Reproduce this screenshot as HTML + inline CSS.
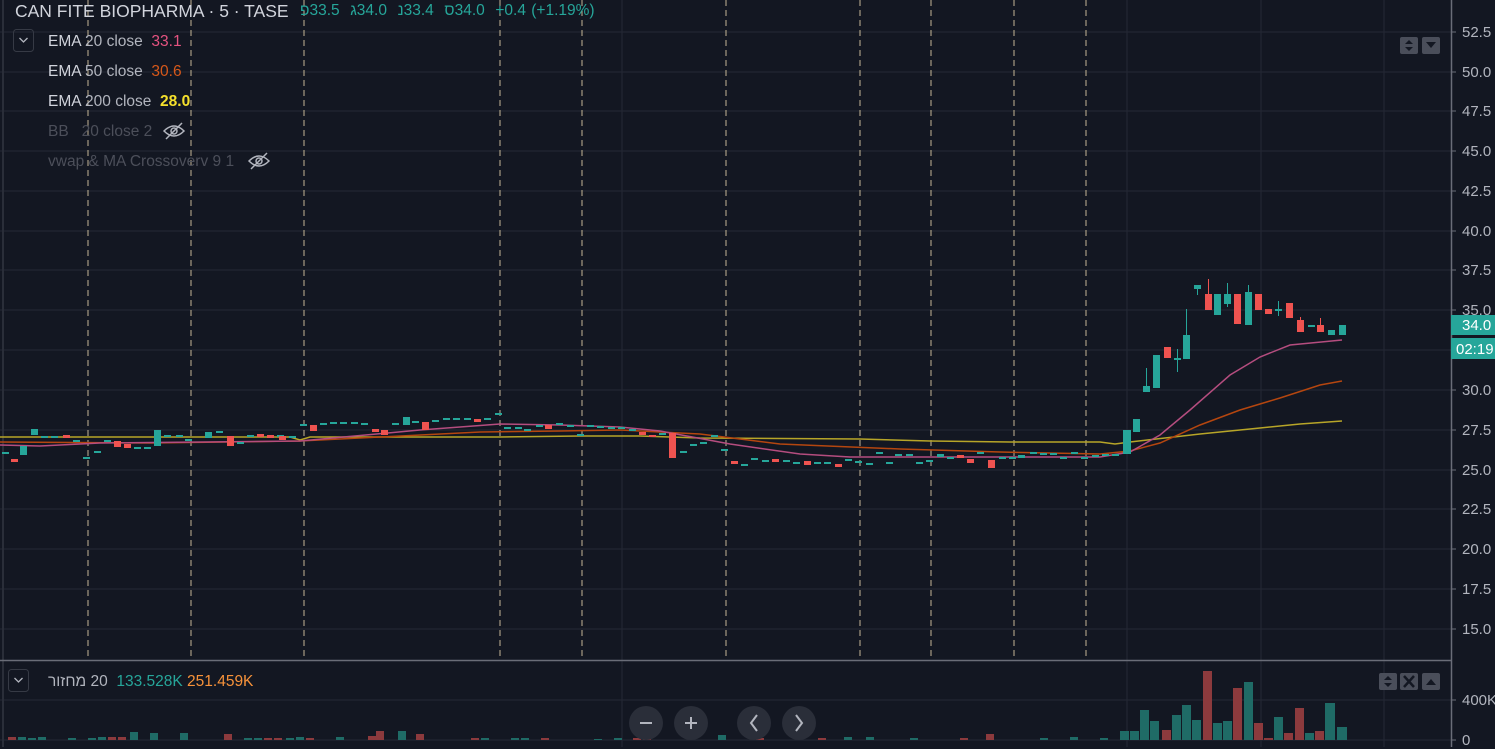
<!DOCTYPE html>
<html><head><meta charset="utf-8"><style>
html,body{margin:0;padding:0;background:#131722;width:1495px;height:747px;overflow:hidden;font-family:"Liberation Sans","Noto Sans CJK JP",sans-serif;}
svg{position:absolute;left:0;top:0}
.t{position:absolute;white-space:nowrap;font-size:15.5px;color:#d1d4dc;direction:ltr;unicode-bidi:isolate}
.t span,.t bdi{unicode-bidi:isolate}
.ax{position:absolute;left:1462px;font-size:15px;color:#b2b5be}
</style></head><body>
<svg width="1495" height="747">
<g stroke="#252935" stroke-width="1">
<line x1="0" y1="32" x2="1451" y2="32"/><line x1="0" y1="72" x2="1451" y2="72"/><line x1="0" y1="111" x2="1451" y2="111"/><line x1="0" y1="151" x2="1451" y2="151"/><line x1="0" y1="191" x2="1451" y2="191"/><line x1="0" y1="231" x2="1451" y2="231"/><line x1="0" y1="270" x2="1451" y2="270"/><line x1="0" y1="310" x2="1451" y2="310"/><line x1="0" y1="350" x2="1451" y2="350"/><line x1="0" y1="390" x2="1451" y2="390"/><line x1="0" y1="430" x2="1451" y2="430"/><line x1="0" y1="470" x2="1451" y2="470"/><line x1="0" y1="509" x2="1451" y2="509"/><line x1="0" y1="549" x2="1451" y2="549"/><line x1="0" y1="589" x2="1451" y2="589"/><line x1="0" y1="629" x2="1451" y2="629"/>
<line x1="0" y1="700" x2="1451" y2="700"/><line x1="0" y1="740" x2="1451" y2="740"/>
<line x1="622" y1="0" x2="622" y2="747"/><line x1="1127" y1="0" x2="1127" y2="747"/><line x1="1261" y1="0" x2="1261" y2="747"/><line x1="1384" y1="0" x2="1384" y2="747"/>
<line x1="3" y1="0" x2="3" y2="747" stroke="#2a2e39" stroke-width="2"/>
</g>
<g stroke="#d9c8a2" stroke-width="1" stroke-dasharray="6,4" opacity="0.9">
<line x1="88" y1="0" x2="88" y2="660"/><line x1="191" y1="0" x2="191" y2="660"/><line x1="304" y1="0" x2="304" y2="660"/><line x1="500" y1="0" x2="500" y2="660"/><line x1="582" y1="0" x2="582" y2="660"/><line x1="726" y1="0" x2="726" y2="660"/><line x1="860" y1="0" x2="860" y2="660"/><line x1="931" y1="0" x2="931" y2="660"/><line x1="1014" y1="0" x2="1014" y2="660"/><line x1="1086" y1="0" x2="1086" y2="660"/>
</g>
<line x1="0" y1="660.5" x2="1451" y2="660.5" stroke="#6a6d78" stroke-width="1.5"/>
<line x1="1451.5" y1="0" x2="1451.5" y2="747" stroke="#6a6d78" stroke-width="1.5"/>
<g stroke="#6a6d78"><line x1="1451" y1="32" x2="1456" y2="32"/><line x1="1451" y1="72" x2="1456" y2="72"/><line x1="1451" y1="111" x2="1456" y2="111"/><line x1="1451" y1="151" x2="1456" y2="151"/><line x1="1451" y1="191" x2="1456" y2="191"/><line x1="1451" y1="231" x2="1456" y2="231"/><line x1="1451" y1="270" x2="1456" y2="270"/><line x1="1451" y1="310" x2="1456" y2="310"/><line x1="1451" y1="390" x2="1456" y2="390"/><line x1="1451" y1="430" x2="1456" y2="430"/><line x1="1451" y1="470" x2="1456" y2="470"/><line x1="1451" y1="509" x2="1456" y2="509"/><line x1="1451" y1="549" x2="1456" y2="549"/><line x1="1451" y1="589" x2="1456" y2="589"/><line x1="1451" y1="629" x2="1456" y2="629"/><line x1="1451" y1="700" x2="1456" y2="700"/><line x1="1451" y1="740" x2="1456" y2="740"/></g>
<polyline fill="none" stroke="#b7a528" stroke-width="1.5" points="0,437 290,437 300,440 310,437 500,437 580,436 640,436 700,438 860,439 930,441 1010,442 1100,442 1115,444 1130,442 1200,434 1260,428 1300,424 1342,421"/>
<polyline fill="none" stroke="#b5460f" stroke-width="1.5" points="0,442 150,443 300,441 480,432 560,431 620,430 700,434 780,444 900,449 1000,452 1100,454 1130,451 1160,443 1200,425 1240,410 1280,398 1320,385 1342,381"/>
<polyline fill="none" stroke="#b54d7f" stroke-width="1.5" points="0,445 40,446 100,443 300,441 420,430 500,424 560,425 620,427 660,431 730,444 800,454 850,457 1000,457 1100,457 1130,452 1160,435 1190,410 1230,375 1260,357 1290,345 1342,340"/>
<g fill="#26a69a">
<rect x="2" y="452" width="7" height="2"/><rect x="20" y="446" width="7" height="9"/><rect x="31" y="429" width="7" height="6"/><rect x="41" y="436" width="7" height="2"/><rect x="51" y="436" width="7" height="2"/><rect x="73" y="440" width="7" height="2"/><rect x="83" y="457" width="7" height="2"/><rect x="94" y="451" width="7" height="2"/><rect x="104" y="440" width="7" height="2"/><rect x="134" y="447" width="7" height="2"/><rect x="144" y="447" width="7" height="2"/><rect x="154" y="430" width="7" height="16"/><rect x="164" y="435" width="7" height="2"/><rect x="176" y="435" width="7" height="2"/><rect x="185" y="439" width="7" height="2"/><rect x="205" y="432" width="7" height="6"/><rect x="216" y="431" width="7" height="2"/><rect x="237" y="442" width="7" height="2"/><rect x="247" y="435" width="7" height="2"/><rect x="277" y="435" width="7" height="2"/>
<rect x="289" y="436" width="7" height="2"/><rect x="300" y="424" width="7" height="2"/><rect x="320" y="423" width="7" height="2"/><rect x="330" y="422" width="7" height="2"/><rect x="340" y="422" width="7" height="2"/><rect x="351" y="422" width="7" height="2"/><rect x="361" y="423" width="7" height="2"/><rect x="392" y="423" width="7" height="2"/><rect x="403" y="417" width="7" height="8"/><rect x="412" y="421" width="7" height="2"/><rect x="432" y="420" width="7" height="2"/><rect x="443" y="418" width="7" height="2"/><rect x="453" y="418" width="7" height="2"/><rect x="464" y="418" width="7" height="2"/><rect x="484" y="418" width="7" height="2"/><rect x="495" y="413" width="7" height="2"/><rect x="504" y="427" width="7" height="2"/><rect x="515" y="427" width="7" height="2"/><rect x="524" y="429" width="7" height="2"/><rect x="536" y="425" width="7" height="2"/><rect x="556" y="423" width="7" height="2"/><rect x="567" y="425" width="7" height="2"/><rect x="577" y="434" width="7" height="2"/><rect x="587" y="425" width="7" height="2"/><rect x="597" y="426" width="7" height="2"/>
<rect x="608" y="427" width="7" height="2"/><rect x="618" y="427" width="7" height="2"/><rect x="629" y="429" width="7" height="2"/><rect x="659" y="433" width="7" height="2"/><rect x="680" y="451" width="7" height="2"/><rect x="690" y="444" width="7" height="2"/><rect x="700" y="442" width="7" height="2"/><rect x="711" y="435" width="7" height="2"/><rect x="721" y="449" width="7" height="2"/><rect x="741" y="464" width="7" height="2"/><rect x="751" y="458" width="7" height="2"/><rect x="762" y="460" width="7" height="2"/><rect x="783" y="460" width="7" height="2"/><rect x="793" y="462" width="7" height="2"/><rect x="814" y="462" width="7" height="2"/><rect x="824" y="462" width="7" height="2"/><rect x="845" y="459" width="7" height="2"/><rect x="855" y="461" width="7" height="2"/><rect x="866" y="463" width="7" height="2"/><rect x="876" y="452" width="7" height="2"/><rect x="886" y="462" width="7" height="2"/><rect x="895" y="454" width="7" height="2"/><rect x="906" y="454" width="7" height="2"/><rect x="916" y="462" width="7" height="2"/><rect x="926" y="460" width="7" height="2"/><rect x="937" y="454" width="7" height="3"/><rect x="947" y="457" width="7" height="2"/><rect x="977" y="452" width="7" height="2"/><rect x="999" y="457" width="7" height="2"/><rect x="1009" y="457" width="7" height="2"/><rect x="1018" y="455" width="7" height="3"/><rect x="1030" y="452" width="7" height="2"/><rect x="1040" y="453" width="7" height="2"/><rect x="1050" y="453" width="7" height="2"/><rect x="1060" y="457" width="7" height="2"/><rect x="1071" y="452" width="7" height="2"/><rect x="1081" y="457" width="7" height="2"/><rect x="1092" y="455" width="7" height="2"/><rect x="1102" y="454" width="7" height="2"/><rect x="1112" y="454" width="7" height="2"/>
<rect x="1123" y="430" width="8" height="24"/><rect x="1133" y="419" width="7" height="13"/><rect x="1143" y="386" width="7" height="6"/><rect x="1146" y="368" width="1" height="20"/><rect x="1153" y="355" width="7" height="33"/><rect x="1174" y="358" width="7" height="2"/><rect x="1177" y="349" width="1" height="23"/><rect x="1183" y="335" width="7" height="24"/><rect x="1186" y="309" width="1" height="26"/><rect x="1194" y="285" width="7" height="4"/><rect x="1197" y="285" width="1" height="10"/><rect x="1214" y="294" width="7" height="21"/><rect x="1224" y="294" width="7" height="10"/><rect x="1227" y="283" width="1" height="24"/><rect x="1245" y="292" width="7" height="33"/><rect x="1248" y="285" width="1" height="8"/><rect x="1275" y="309" width="7" height="2"/><rect x="1278" y="301" width="1" height="15"/><rect x="1308" y="325" width="7" height="2"/><rect x="1328" y="330" width="7" height="5"/><rect x="1339" y="325" width="7" height="10"/>
</g>
<g fill="#ef5350">
<rect x="11" y="459" width="7" height="3"/><rect x="63" y="435" width="7" height="3"/><rect x="114" y="441" width="7" height="6"/><rect x="124" y="444" width="7" height="4"/><rect x="227" y="436" width="7" height="10"/><rect x="257" y="434" width="7" height="3"/><rect x="267" y="435" width="7" height="3"/><rect x="279" y="436" width="7" height="4"/><rect x="310" y="425" width="7" height="6"/><rect x="372" y="429" width="7" height="3"/><rect x="381" y="430" width="7" height="5"/><rect x="422" y="422" width="7" height="8"/><rect x="474" y="419" width="7" height="3"/><rect x="545" y="425" width="7" height="4"/><rect x="639" y="432" width="7" height="3"/><rect x="649" y="435" width="7" height="2"/><rect x="669" y="433" width="7" height="25"/><rect x="731" y="461" width="7" height="3"/><rect x="772" y="459" width="7" height="3"/><rect x="804" y="461" width="7" height="4"/><rect x="835" y="464" width="7" height="3"/><rect x="957" y="455" width="7" height="3"/><rect x="967" y="459" width="7" height="4"/><rect x="988" y="460" width="7" height="8"/>
<rect x="1164" y="347" width="7" height="11"/><rect x="1205" y="294" width="7" height="16"/><rect x="1208" y="279" width="1" height="15"/><rect x="1234" y="294" width="7" height="30"/><rect x="1255" y="294" width="7" height="16"/><rect x="1265" y="309" width="7" height="5"/><rect x="1286" y="303" width="7" height="15"/><rect x="1297" y="320" width="7" height="12"/><rect x="1300" y="317" width="1" height="3"/><rect x="1317" y="325" width="7" height="7"/><rect x="1320" y="318" width="1" height="7"/>
</g>
<g fill="#1f6b66">
<rect x="18" y="737" width="8" height="3"/><rect x="28" y="738" width="8" height="2"/><rect x="38" y="737" width="8" height="3"/><rect x="68" y="738" width="8" height="2"/><rect x="88" y="738" width="8" height="2"/><rect x="98" y="737" width="8" height="3"/><rect x="130" y="732" width="8" height="8"/><rect x="150" y="733" width="8" height="7"/><rect x="180" y="733" width="8" height="7"/><rect x="244" y="738" width="8" height="2"/><rect x="254" y="738" width="8" height="2"/><rect x="286" y="738" width="8" height="2"/><rect x="296" y="737" width="8" height="3"/><rect x="336" y="737" width="8" height="3"/><rect x="398" y="731" width="8" height="9"/><rect x="481" y="738" width="8" height="2"/><rect x="511" y="738" width="8" height="2"/><rect x="521" y="738" width="8" height="2"/><rect x="594" y="739" width="8" height="1"/><rect x="614" y="738" width="8" height="2"/><rect x="718" y="735" width="8" height="5"/><rect x="844" y="737" width="8" height="3"/><rect x="866" y="737" width="8" height="3"/><rect x="910" y="738" width="8" height="2"/><rect x="1040" y="738" width="8" height="2"/><rect x="1070" y="737" width="8" height="3"/><rect x="1100" y="738" width="8" height="2"/>
<rect x="1120" y="731" width="9" height="9"/><rect x="1130" y="731" width="9" height="9"/><rect x="1140" y="710" width="9" height="30"/><rect x="1150" y="721" width="9" height="19"/><rect x="1172" y="715" width="9" height="25"/><rect x="1182" y="705" width="9" height="35"/><rect x="1192" y="720" width="9" height="20"/><rect x="1213" y="723" width="9" height="17"/><rect x="1223" y="721" width="9" height="19"/><rect x="1244" y="682" width="9" height="58"/><rect x="1274" y="717" width="9" height="23"/><rect x="1305" y="733" width="9" height="7"/><rect x="1325" y="703" width="10" height="37"/><rect x="1337" y="727" width="10" height="13"/>
</g>
<g fill="#8c3a3d">
<rect x="8" y="737" width="8" height="3"/><rect x="108" y="737" width="8" height="3"/><rect x="118" y="737" width="8" height="3"/><rect x="224" y="734" width="8" height="6"/><rect x="264" y="738" width="8" height="2"/><rect x="274" y="738" width="8" height="2"/><rect x="306" y="738" width="8" height="2"/><rect x="368" y="736" width="8" height="4"/><rect x="376" y="731" width="8" height="9"/><rect x="416" y="734" width="8" height="6"/><rect x="471" y="738" width="8" height="2"/><rect x="541" y="738" width="8" height="2"/><rect x="633" y="738" width="8" height="2"/><rect x="643" y="737" width="8" height="3"/><rect x="756" y="738" width="8" height="2"/><rect x="818" y="738" width="8" height="2"/><rect x="960" y="738" width="8" height="2"/><rect x="986" y="734" width="8" height="6"/>
<rect x="1162" y="730" width="9" height="10"/><rect x="1203" y="671" width="9" height="69"/><rect x="1233" y="688" width="9" height="52"/><rect x="1254" y="723" width="9" height="17"/><rect x="1264" y="738" width="9" height="2"/><rect x="1284" y="733" width="9" height="7"/><rect x="1295" y="708" width="9" height="32"/><rect x="1315" y="731" width="9" height="9"/>
</g>
<rect x="1451" y="315" width="44" height="20" fill="#26a69a"/>
<rect x="1451" y="338" width="44" height="21" fill="#26a69a"/>
<g fill="#4a4e5a">
<rect x="1400" y="37" width="18" height="17" rx="2"/><rect x="1422" y="37" width="18" height="17" rx="2"/>
<rect x="1379" y="673" width="18" height="17" rx="2"/><rect x="1400" y="673" width="18" height="17" rx="2"/><rect x="1422" y="673" width="18" height="17" rx="2"/>
</g>
<g fill="#131722">
<polygon points="1409,40 1413,44 1405,44"/><polygon points="1405,47 1413,47 1409,51"/>
<polygon points="1426,42 1436,42 1431,48"/>
<polygon points="1388,676 1392,680 1384,680"/><polygon points="1384,683 1392,683 1388,687"/>
<polygon points="1426,685 1436,685 1431,679"/>
</g>
<path d="M1404,676 L1414,687 M1414,676 L1404,687" stroke="#131722" stroke-width="2.5"/>
<rect x="13.5" y="29.5" width="20" height="22" rx="3" fill="none" stroke="#363a45"/>
<path d="M19.5,38 L23.5,42 L27.5,38" fill="none" stroke="#b2b5be" stroke-width="1.3"/>
<rect x="8.5" y="669.5" width="20" height="22" rx="3" fill="none" stroke="#363a45"/>
<path d="M14.5,678 L18.5,682 L22.5,678" fill="none" stroke="#b2b5be" stroke-width="1.3"/>
<g fill="none" stroke="#b2b5be" stroke-width="1.5">
<path d="M164,131 Q174,121 184,131 Q174,141 164,131 Z"/><circle cx="174" cy="131" r="3"/><line x1="166" y1="139" x2="182" y2="123"/>
<path d="M249,161 Q259,151 269,161 Q259,171 249,161 Z"/><circle cx="259" cy="161" r="3"/><line x1="251" y1="169" x2="267" y2="153"/>
</g>
<g fill="#2a2e39"><circle cx="646" cy="723" r="17"/><circle cx="691" cy="723" r="17"/><circle cx="754" cy="723" r="17"/><circle cx="799" cy="723" r="17"/></g>
<g stroke="#b2b5be" stroke-width="2" fill="none">
<line x1="640" y1="723" x2="652" y2="723"/><line x1="685" y1="723" x2="697" y2="723"/><line x1="691" y1="717" x2="691" y2="729"/>
<path d="M757,715 L751,723 L757,731"/><path d="M796,715 L802,723 L796,731"/>
</g>
</svg>
<div class="t" style="left:15px;top:1px;font-size:17.5px">CAN FITE BIOPHARMA · 5 · TASE</div>
<div class="t" style="left:300px;top:2px;font-size:15.5px;color:#26a69a;word-spacing:1px"><span>פ</span>33.5 &nbsp;<span>ג</span>34.0 &nbsp;<span>נ</span>33.4 &nbsp;<span>ס</span>34.0 &nbsp;+0.4 (+1.19%)</div>
<div class="t" style="left:48px;top:33px">EMA <span style="color:#b2b5be">20 close</span> &nbsp;<span style="color:#e55380">33.1</span></div>
<div class="t" style="left:48px;top:63px">EMA <span style="color:#b2b5be">50 close</span> &nbsp;<span style="color:#d6581a">30.6</span></div>
<div class="t" style="left:48px;top:93px">EMA <span style="color:#b2b5be">200 close</span> &nbsp;<span style="color:#f5e02c;font-weight:bold">28.0</span></div>
<div class="t" style="left:48px;top:123px;color:#4c4f5a">BB &nbsp;&nbsp;20 close 2</div>
<div class="t" style="left:48px;top:153px;color:#4c4f5a">vwap &amp; MA Crossoverv 9 1</div>
<div class="t" style="left:48px;top:673px;color:#b2b5be"><bdi>מחזור</bdi> 20 &nbsp;<span style="color:#26a69a">133.528K</span> <span style="color:#f7923a">251.459K</span></div>
<div class="ax" style="top:24px">52.5</div><div class="ax" style="top:64px">50.0</div><div class="ax" style="top:103px">47.5</div><div class="ax" style="top:143px">45.0</div><div class="ax" style="top:183px">42.5</div><div class="ax" style="top:223px">40.0</div><div class="ax" style="top:262px">37.5</div><div class="ax" style="top:302px">35.0</div><div class="ax" style="top:382px">30.0</div><div class="ax" style="top:422px">27.5</div><div class="ax" style="top:462px">25.0</div><div class="ax" style="top:501px">22.5</div><div class="ax" style="top:541px">20.0</div><div class="ax" style="top:581px">17.5</div><div class="ax" style="top:621px">15.0</div><div class="ax" style="top:692px">400K</div><div class="ax" style="top:732px">0</div>
<div class="ax" style="top:317px;color:#fff">34.0</div>
<div class="ax" style="top:341px;left:1456px;color:#fff">02:19</div>
</body></html>
